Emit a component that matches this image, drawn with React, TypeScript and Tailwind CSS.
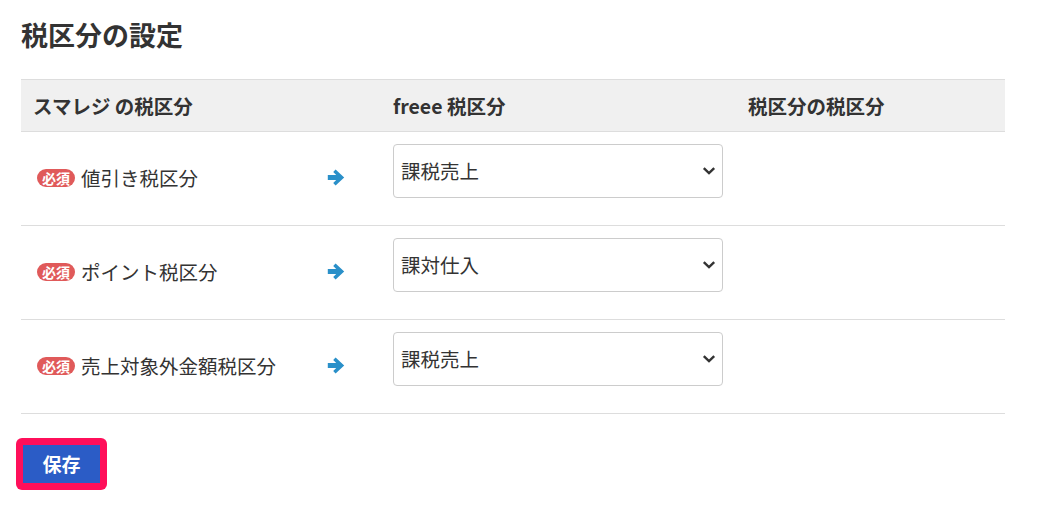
import React from "react";

const font = { fontFamily: '"Noto Sans CJK JP", "Noto Sans", sans-serif' };

type Row = { label: string; value: string };

const rows: Row[] = [
  { label: "値引き税区分", value: "課税売上" },
  { label: "ポイント税区分", value: "課対仕入" },
  { label: "売上対象外金額税区分", value: "課税売上" },
];

const options = ["課税売上", "課対仕入", "非課税売上", "対象外"];

function ArrowRight() {
  return (
    <svg width="18" height="17" viewBox="0 0 18 17" className="text-[#2a90c9]">
      <path
        d="M8.6 0.6 L17.2 8.5 L8.6 16.4 L6.2 14 L9.2 11 L0.8 11 L0.8 6 L9.2 6 L6.2 3 Z"
        fill="currentColor"
      />
    </svg>
  );
}

function Chevron() {
  return (
    <svg width="14" height="10" viewBox="0 0 14 10" className="pointer-events-none absolute right-[7px] top-1/2 -translate-y-1/2">
      <path d="M1.8 2.2 L7 7.2 L12.2 2.2" fill="none" stroke="#333" strokeWidth="2.4" />
    </svg>
  );
}

export default function App() {
  return (
    <div className="min-h-screen bg-white px-[21px] pt-[15px] text-[#333]" style={font}>
      <h1 className="text-[27px] font-bold leading-[40px]">税区分の設定</h1>

      <div className="mt-[24px] w-[984px]">
        <div className="grid h-[53px] grid-cols-[360px_355px_1fr] items-center border-y border-[#dddddd] bg-[#f0f0f0] text-[19.5px] font-bold">
          <div className="pl-[12px]">スマレジ の税区分</div>
          <div className="pl-[12px]">freee 税区分</div>
          <div className="pl-[12px]">税区分の税区分</div>
        </div>

        {rows.map((r) => (
          <div
            key={r.label}
            className="grid h-[94px] grid-cols-[360px_355px_1fr] items-center border-b border-[#dddddd]"
          >
            <div className="flex items-center justify-between pb-[2px] pl-[16px] pr-[36px]">
              <div className="flex items-center">
                <span className="flex h-[18px] w-[38px] items-center justify-center rounded-full bg-[#e05a5a] text-[14px] font-bold leading-none text-white">
                  必須
                </span>
                <span className="ml-[6px] text-[19.5px] leading-none">{r.label}</span>
              </div>
              <ArrowRight />
            </div>
            <div className="self-start pl-[12px] pt-[12px]">
              <div className="relative w-[330px]">
                <select
                  defaultValue={r.value}
                  className="h-[54px] w-full appearance-none rounded-[4px] border border-[#cccccc] bg-white pl-[7px] text-[19.5px] text-[#333] outline-none"
                  style={font}
                >
                  {options.map((o) => (
                    <option key={o} value={o}>
                      {o}
                    </option>
                  ))}
                </select>
                <Chevron />
              </div>
            </div>
            <div />
          </div>
        ))}
      </div>

      <div className="mt-[24px] -ml-[5px]">
        <div className="inline-block rounded-[6px] bg-[#ff0f5a] p-[7px]">
          <button className="flex h-[38px] w-[77px] items-center justify-center bg-[#2b5cc6] text-[19px] font-bold text-white" style={font}>
            保存
          </button>
        </div>
      </div>
    </div>
  );
}
